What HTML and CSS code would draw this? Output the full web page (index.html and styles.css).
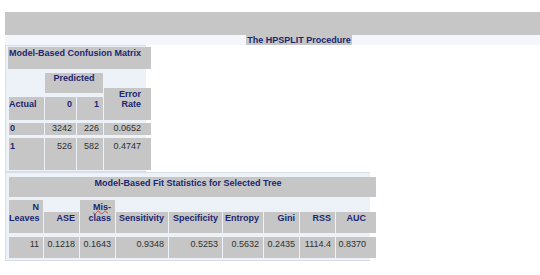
FILE: index.html
```html
<!DOCTYPE html>
<html>
<head>
<meta charset="utf-8">
<title>The HPSPLIT Procedure</title>
<link rel="stylesheet" href="styles.css">
</head>
<body>
<div class="page">
  <div class="banner"></div>
  <div class="proc"><span class="proc-title">The HPSPLIT Procedure</span></div>

  <div class="tbl cm">
    <div class="c h title">Model-Based Confusion Matrix</div>
    <div class="c h actual">Actual</div>
    <div class="c h pred">Predicted</div>
    <div class="c h err r last">Error<br>Rate</div>
    <div class="c h h0 r">0</div>
    <div class="c h h1 r">1</div>

    <div class="c h rowh r4 col1">0</div>
    <div class="c v r r4 col2">3242</div>
    <div class="c v r r4 col3">226</div>
    <div class="c v r r4 col4 last">0.0652</div>

    <div class="c h rowh r5 col1">1</div>
    <div class="c v r r5 col2">526</div>
    <div class="c v r r5 col3">582</div>
    <div class="c v r r5 col4 last">0.4747</div>
  </div>

  <div class="tbl fs">
    <div class="c h title">Model-Based Fit Statistics for Selected Tree</div>
    <div class="c h r tall">N<br>Leaves</div>
    <div class="c h r short">ASE</div>
    <div class="c h r tall"><span class="sp">Mis</span>-<br>class</div>
    <div class="c h r short">Sensitivity</div>
    <div class="c h r short">Specificity</div>
    <div class="c h r short">Entropy</div>
    <div class="c h r short">Gini</div>
    <div class="c h r short">RSS</div>
    <div class="c h r short last">AUC</div>

    <div class="c v r dv">11</div>
    <div class="c v r dv">0.1218</div>
    <div class="c v r dv">0.1643</div>
    <div class="c v r dv">0.9348</div>
    <div class="c v r dv">0.5253</div>
    <div class="c v r dv">0.5632</div>
    <div class="c v r dv">0.2435</div>
    <div class="c v r dv">1114.4</div>
    <div class="c v r dv last">0.8370</div>
  </div>
</div>
</body>
</html>
```

FILE: styles.css
```css
html, body {
  margin: 0;
  padding: 0;
  background: #ffffff;
  overflow: hidden;
}

body {
  font-family: "Liberation Sans", Arial, sans-serif;
  font-size: 9px;
  line-height: 10px;
  color: #303030;
}

.page {
  width: 535px;
  padding: 12px 0 0 5px;
}

.banner {
  height: 23px;
  background: #c6c6c6;
}

.proc {
  height: 10px;
  line-height: 10px;
  background: #f4f6fb;
  text-align: center;
  padding-left: 53px;
}

.proc-title {
  background: #c6c6c6;
  color: #1b2670;
  font-weight: bold;
  padding: 0 1px;
}

.tbl {
  display: grid;
  width: fit-content;
  column-gap: 1px;
  background: #edf1f8;
  border: 1px solid #d9dee6;
  border-right: 0;
  padding-left: 3px;
}

.c {
  background: #c6c6c6;
  min-width: 0;
  white-space: nowrap;
}

.h {
  color: #1b2670;
  font-weight: bold;
}

.v {
  color: #303030;
}

.r {
  text-align: right;
  padding-right: 4px;
}

/* Confusion matrix */
.cm {
  grid-template-columns: 35px 31px 26px 42px;
  grid-template-rows: 24px 25px 25px 17px 34px;
}

.cm .title {
  grid-column: 1 / -1;
  grid-row: 1;
  margin: 1px -5px 1px -1px;
  padding: 1px 0 0 1px;
}

.cm .actual {
  grid-column: 1;
  grid-row: 2 / 4;
  margin-top: 27px;
  padding: 2px 0 0 0;
}

.cm .pred {
  grid-column: 2 / 4;
  grid-row: 2;
  margin: 3px 0 2px 0;
  text-align: center;
}

.cm .err {
  grid-column: 4;
  grid-row: 2 / 4;
  margin-top: 18px;
  padding-top: 1px;
}

.cm .h0 {
  grid-column: 2;
  grid-row: 3;
  margin-top: 2px;
  padding-top: 2px;
}

.cm .h1 {
  grid-column: 3;
  grid-row: 3;
  margin-top: 2px;
  padding-top: 2px;
}

.cm .col1 { grid-column: 1; }
.cm .col2 { grid-column: 2; }
.cm .col3 { grid-column: 3; }
.cm .col4 { grid-column: 4; }

.cm .rowh {
  padding-left: 1px;
}

.cm .r4 {
  grid-row: 4;
  margin: 3px 0 2px 0;
}

.cm .r5 {
  grid-row: 5;
  margin: 1px 0 1px 0;
  padding-top: 3px;
}

.cm .last {
  margin-right: -5px;
  padding-right: 10px;
}

/* Fit statistics */
.fs {
  grid-template-columns: 34px 35px 35px 52px 53px 40px 35px 35px 34px;
  grid-template-rows: 24px 36px 27px;
}

.fs .title {
  grid-column: 1 / -1;
  margin: 4px -6px 0 0;
  padding: 1px 9px 0 0;
  text-align: center;
}

.fs .tall {
  margin-top: 3px;
  padding-top: 2px;
  line-height: 11px;
}

.fs .short {
  margin-top: 15px;
  padding-top: 1px;
}

.fs .dv {
  margin: 4px 0 2px 0;
  padding-top: 2px;
}

.fs .last {
  margin-right: -6px;
  padding-right: 10px;
}

.sp {
  text-decoration: underline wavy #e03a3a;
  text-decoration-thickness: 1px;
  text-underline-offset: 0;
  text-decoration-skip-ink: none;
}
```
